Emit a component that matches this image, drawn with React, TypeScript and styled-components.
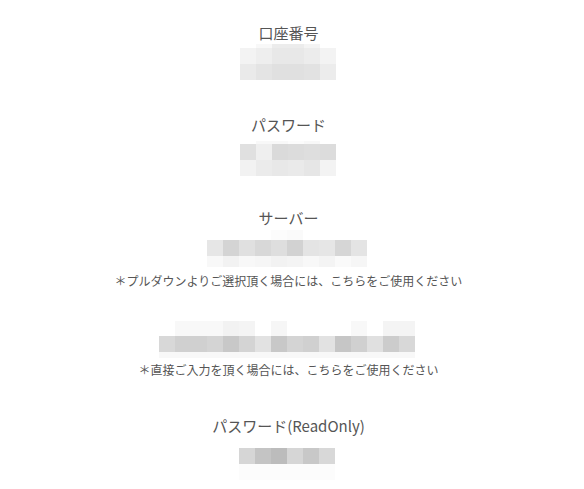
import React from 'react'
import styled, { createGlobalStyle } from 'styled-components'

const GlobalStyle = createGlobalStyle`
  html, body {
    margin: 0;
    padding: 0;
    background: #fff;
  }
  body {
    font-family: "Noto Sans CJK JP", "Noto Sans", sans-serif;
    color: #555;
  }
`

const PAGE = styled.div`
  width: 577px;
  display: flex;
  flex-direction: column;
  align-items: center;
  padding-top: 23px;
`

const FIELD = styled.div<{ $top: number }>`
  display: flex;
  flex-direction: column;
  align-items: center;
  margin-top: ${({ $top }) => $top}px;
`

const LABEL = styled.div`
  font-size: 15px;
  line-height: 20px;
  height: 20px;
  color: #555;
  white-space: nowrap;
`

const NOTE = styled.div<{ $top: number }>`
  font-size: 12px;
  line-height: 16px;
  height: 16px;
  margin-top: ${({ $top }) => $top}px;
  color: #555;
  white-space: nowrap;
`

const MOSAIC = styled.div<{ $top: number }>`
  display: flex;
  flex-direction: column;
  margin-top: ${({ $top }) => $top}px;
  margin-right: 2px;
`

const MOSAIC_ROW = styled.div<{ $h: number }>`
  display: flex;
  height: ${({ $h }) => $h}px;
`

const CELL = styled.div`
  width: 16px;
  height: 100%;
`

type Row = { h: number; cells: string[] }

const Mosaic = ({ rows, top }: { rows: Row[]; top: number }) => (
  <MOSAIC $top={top}>
    {rows.map((r, i) => (
      <MOSAIC_ROW key={i} $h={r.h}>
        {r.cells.map((c, j) => (
          <CELL key={j} style={{ background: c }} />
        ))}
      </MOSAIC_ROW>
    ))}
  </MOSAIC>
)

const account: Row[] = [
  { h: 4, cells: ['#fff', '#f8f8f8', '#ececec', '#ececec', '#f4f4f4', '#fff'] },
  { h: 16, cells: ['#f3f3f3', '#eeeeee', '#e8e8e8', '#e8e8e8', '#ececec', '#f3f3f3'] },
  { h: 16, cells: ['#eaeaea', '#e4e4e4', '#e0e0e0', '#e0e0e0', '#e2e2e2', '#ececec'] },
]

const password: Row[] = [
  { h: 3, cells: ['#fff', '#f8f8f8', '#f8f8f8', '#fcfcfc', '#f8f8f8', '#fff'] },
  { h: 16, cells: ['#e0e0e0', '#efefef', '#dadada', '#dcdcdc', '#dedede', '#dcdcdc'] },
  { h: 16, cells: ['#f2f2f2', '#ebebeb', '#e8e8e8', '#eaeaea', '#e6e6e6', '#f3f3f3'] },
]

const server: Row[] = [
  { h: 10, cells: ['#fff', '#fff', '#fff', '#fff', '#fcfcfc', '#fafafa', '#fff', '#fff', '#fff', '#fff'] },
  {
    h: 16,
    cells: ['#e6e6e6', '#d4d4d4', '#e0e0e0', '#d8d8d8', '#dedede', '#d2d2d2', '#e4e4e4', '#e6e6e6', '#d6d6d6', '#e4e4e4'],
  },
  {
    h: 11,
    cells: ['#f8f8f8', '#f2f2f2', '#f8f8f8', '#f6f6f6', '#f2f2f2', '#f4f4f4', '#f8f8f8', '#f4f4f4', '#fafafa', '#f6f6f6'],
  },
]

const serverDirect: Row[] = [
  {
    h: 15,
    cells: [
      '#fff', '#f8f8f8', '#f8f8f8', '#f8f8f8', '#f2f2f2', '#f4f4f4', '#fff', '#f6f6f6',
      '#fff', '#fff', '#fff', '#fff', '#f8f8f8', '#fff', '#f4f4f4', '#f4f4f4',
    ],
  },
  {
    h: 16,
    cells: [
      '#d8d8d8', '#d0d0d0', '#d0d0d0', '#d4d4d4', '#c8c8c8', '#d4d4d4', '#e2e2e2', '#c8c8c8',
      '#d4d4d4', '#d0d0d0', '#e2e2e2', '#c6c6c6', '#d0d0d0', '#e0e0e0', '#cccccc', '#d8d8d8',
    ],
  },
  { h: 6, cells: Array(16).fill('#f8f8f8') },
]

const readOnly: Row[] = [
  { h: 16, cells: ['#d6d6d6', '#c4c4c4', '#bcbcbc', '#d6d6d6', '#c8c8c8', '#d8d8d8'] },
  { h: 16, cells: Array(6).fill('#fcfcfc') },
]

export default function App() {
  return (
    <>
      <GlobalStyle />
      <PAGE>
        <FIELD $top={0}>
          <LABEL>口座番号</LABEL>
          <Mosaic rows={account} top={1} />
        </FIELD>
        <FIELD $top={35}>
          <LABEL>パスワード</LABEL>
          <Mosaic rows={password} top={6} />
        </FIELD>
        <FIELD $top={32}>
          <LABEL>サーバー</LABEL>
          <Mosaic rows={server} top={2} />
          <NOTE $top={6}>＊プルダウンよりご選択頂く場合には、こちらをご使用ください</NOTE>
        </FIELD>
        <FIELD $top={32}>
          <Mosaic rows={serverDirect} top={0} />
          <NOTE $top={4}>＊直接ご入力を頂く場合には、こちらをご使用ください</NOTE>
        </FIELD>
        <FIELD $top={38}>
          <LABEL>パスワード(ReadOnly)</LABEL>
          <Mosaic rows={readOnly} top={12} />
        </FIELD>
      </PAGE>
    </>
  )
}
